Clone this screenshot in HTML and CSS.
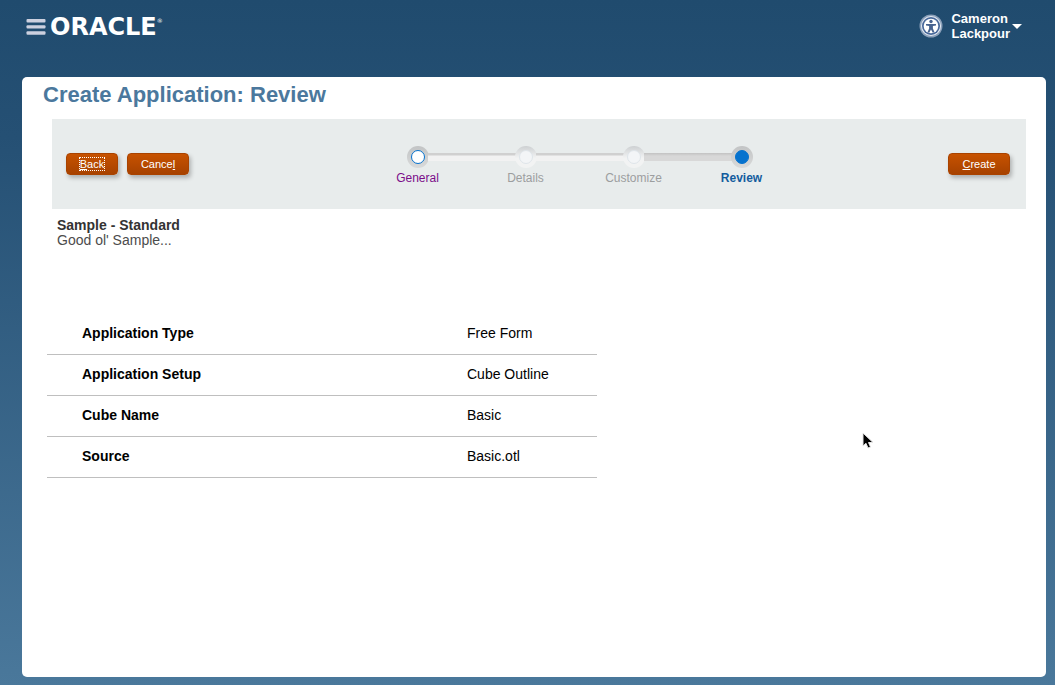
FILE: index.html
```html
<!DOCTYPE html>
<html lang="en">
<head>
<meta charset="utf-8">
<meta name="viewport" content="width=device-width, initial-scale=1">
<title>Create Application: Review</title>
<link rel="stylesheet" href="styles.css">
</head>
<body>
<header class="topbar">
  <div class="brand">
    <button class="menu-button" type="button" aria-label="Menu">
      <svg width="20" height="16" viewBox="0 0 20 16"><g fill="#ccd0df"><rect x="0.5" y="0" width="19" height="3.4" rx="1"/><rect x="0.5" y="6.2" width="19" height="3.4" rx="1"/><rect x="0.5" y="12.3" width="19" height="3.4" rx="1"/></g></svg>
    </button>
    <a class="logo" href="#">ORACLE<sup class="logo-mark">®</sup></a>
  </div>
  <div class="user-area">
    <button class="access-button" type="button" aria-label="Accessibility settings">
      <svg width="24" height="24" viewBox="0 0 24 24"><circle cx="12" cy="12" r="11.5" fill="#8ba0ba"/><circle cx="12" cy="12" r="10" fill="#e4eaf2"/><circle cx="12" cy="12" r="9" fill="#47689a"/><circle cx="12" cy="12" r="7.3" fill="#fff"/><circle cx="12" cy="7.5" r="1.7" fill="#47638f"/><path d="M7 10h10v1.6l-3.1.5v2.3l1.6 3.8-1.7.6L12 15.5l-1.8 3.3-1.7-.6 1.6-3.8v-2.3L7 11.6z" fill="#47638f"/></svg>
    </button>
    <button class="user-button" type="button">
      <span class="user-name">Cameron<br>Lackpour</span>
      <svg width="10" height="5" viewBox="0 0 10 5"><path d="M0 0h10L5 5z" fill="#fff"/></svg>
    </button>
  </div>
</header>
<main class="panel">
  <h1 class="title">Create Application: Review</h1>
  <div class="toolbar">
    <div class="actions">
      <button class="button" type="button"><span class="focus-ring"><u>B</u>ack</span></button>
      <button class="button button-wide" type="button">Cance<u>l</u></button>
    </div>
    <ol class="train">
      <li class="step step-visited"><span class="stop"></span><a class="step-label" href="#">General</a></li>
      <li class="step"><span class="stop"></span><span class="step-label">Details</span></li>
      <li class="step step-before-current"><span class="stop"></span><span class="step-label">Customize</span></li>
      <li class="step step-current" aria-current="step"><span class="stop"></span><span class="step-label">Review</span></li>
    </ol>
    <button class="button button-wide" type="button"><u>C</u>reate</button>
  </div>
  <section class="summary">
    <h2 class="summary-name">Sample - Standard</h2>
    <p class="summary-text">Good ol' Sample...</p>
  </section>
  <table class="details">
    <tbody>
      <tr><th scope="row">Application Type</th><td>Free Form</td></tr>
      <tr><th scope="row">Application Setup</th><td>Cube Outline</td></tr>
      <tr><th scope="row">Cube Name</th><td>Basic</td></tr>
      <tr><th scope="row">Source</th><td>Basic.otl</td></tr>
    </tbody>
  </table>
</main>
<svg class="pointer" width="12" height="18" viewBox="0 0 12 18"><path d="M1 1v13l3-2.7L6 16l2.5-1-2-4.5H11z" fill="#000" stroke="#e4e4e4"/></svg>
</body>
</html>
```
FILE: styles.css
```css
*,
*::before,
*::after {
  box-sizing: border-box;
}

body {
  position: relative;
  display: flex;
  flex-direction: column;
  min-height: 100vh;
  margin: 0;
  padding: 0 9px 8px 22px;
  background: linear-gradient(#204b6e, #255074 20%, #4a789b);
  color: #000;
  font-family: "Liberation Sans", Arial, sans-serif;
  font-size: 14px;
}

button {
  margin: 0;
  padding: 0;
  border: 0;
  background: none;
  color: inherit;
  font: inherit;
  cursor: pointer;
}

svg {
  display: block;
}

.topbar {
  display: flex;
  justify-content: space-between;
  align-items: flex-start;
  height: 77px;
  padding: 11px 24px 0 4px;
}

.brand {
  display: flex;
  align-items: center;
  gap: 4px;
  height: 32px;
}

.logo {
  display: flex;
  color: #fff;
  font-family: "DejaVu Sans", sans-serif;
  font-size: 24px;
  font-weight: bold;
  line-height: 32px;
  text-decoration: none;
}

.logo-mark {
  font-size: 6px;
  font-weight: normal;
  line-height: 20px;
}

.user-area {
  display: flex;
  align-items: center;
  gap: 8px;
}

.user-button {
  display: flex;
  align-items: center;
  gap: 2px;
  color: #fff;
  font-size: 13px;
  font-weight: bold;
  line-height: 15px;
  text-align: left;
}

.panel {
  flex: 1;
  padding: 0 20px;
  border-radius: 5px;
  background: #fff;
}

.title {
  margin: 0;
  padding-left: 1px;
  color: #4b789d;
  font-size: 22px;
  line-height: 36px;
}

.toolbar {
  display: flex;
  align-items: center;
  height: 90px;
  margin: 6px 0 0 10px;
  padding: 0 16px 0 14px;
  background: #e8ecec;
}

.actions {
  display: flex;
  gap: 9px;
  padding-right: 22px;
}

.button {
  min-width: 52px;
  height: 22px;
  border: 1px solid #a94300;
  border-radius: 4px;
  background: linear-gradient(#c75200, #a74200);
  box-shadow: 2px 3px 4px rgba(0, 0, 0, 0.25);
  color: #fff;
  font-size: 11px;
  line-height: 18px;
}

.button-wide {
  min-width: 62px;
}

.focus-ring {
  outline: 1px dotted #fff;
}

.train {
  display: flex;
  margin: 0 auto;
  padding: 0;
  list-style: none;
}

.step {
  position: relative;
  display: flex;
  flex-direction: column;
  align-items: center;
  gap: 2px;
  width: 108px;
  padding-top: 4px;
}

.step:not(:last-child)::after {
  content: "";
  position: absolute;
  top: 11px;
  left: 64px;
  width: 88px;
  height: 8px;
  background: linear-gradient(#d0d0d0 0 2px, #f2f2f2 3px);
}

.step-before-current:not(:last-child)::after {
  background: linear-gradient(#c2c2c2, #d8d8d8 3px);
}

.stop {
  display: grid;
  place-items: center;
  width: 22px;
  height: 22px;
  border-radius: 50%;
  background: linear-gradient(#cdd0d2, #f2f3f3 55%);
}

.stop::before {
  content: "";
  width: 14px;
  height: 14px;
  border: 1px solid #dfe5ea;
  border-radius: 50%;
  background: #f3f5f7;
}

.step-visited .stop,
.step-current .stop {
  background: linear-gradient(#c2c4c5, #d9dada);
}

.step-visited .stop::before {
  border-color: #0572ce;
  background: #fff;
}

.step-current .stop::before {
  border-color: #0572ce;
  background: #0572ce;
}

.step-label {
  color: #9c9e9f;
  font-size: 12px;
  line-height: 16px;
  text-decoration: none;
}

.step-visited .step-label {
  color: #7b0c8a;
}

.step-current .step-label {
  color: #145c9e;
  font-weight: bold;
}

.summary {
  padding: 9px 15px 0;
  line-height: 15px;
}

.summary-name {
  margin: 0;
  color: #333;
  font-size: 14px;
}

.summary-text {
  margin: 0;
  color: #4c4c4c;
}

.details {
  width: 550px;
  max-width: 100%;
  margin: 66px 0 0 5px;
  border-spacing: 0;
  table-layout: fixed;
  line-height: 16px;
}

.details th,
.details td {
  padding: 11px 0 13px 35px;
  border-bottom: 1px solid #bfbfbf;
  text-align: left;
}

.details th {
  width: 70%;
}

.pointer {
  position: absolute;
  top: 432px;
  left: 862px;
}
```
